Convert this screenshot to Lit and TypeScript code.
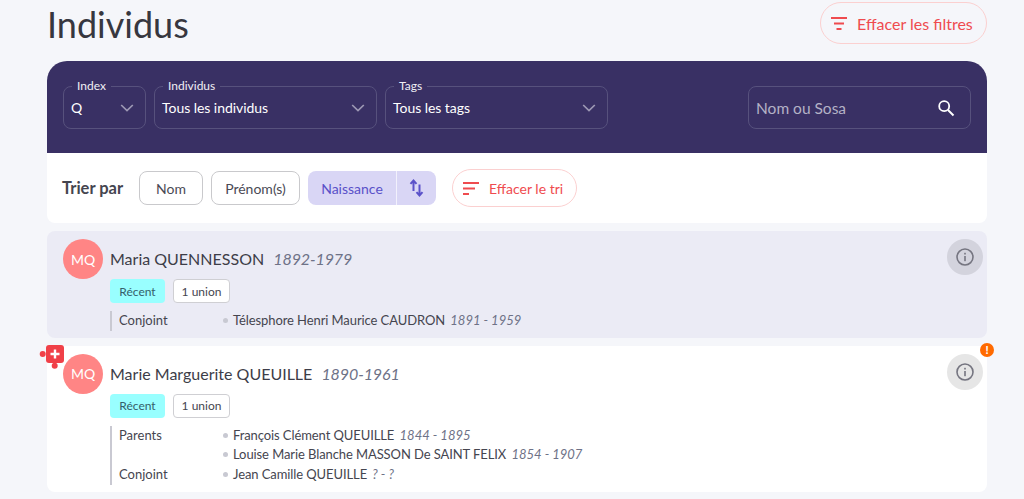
import { LitElement, html, css } from "lit";
import { customElement } from "lit/decorators.js";

const chevron = html`<svg class="chev" width="14" height="8" viewBox="0 0 14 8"><path d="M1.200 1 7 6.600 12.800 1" fill="none" stroke="#9c97b3" stroke-width="1.700"/></svg>`;
const infoIcon = html`<svg width="20" height="20" viewBox="0 0 20 20"><circle cx="10" cy="10" r="8" fill="none" stroke="#757580" stroke-width="1.600"/><rect x="9.200" y="9" width="1.600" height="5.200" fill="#757580"/><rect x="9.200" y="5.800" width="1.600" height="1.700" fill="#757580"/></svg>`;

type Rel = { label: string; name: string; dates: string };
type Person = { name: string; dates: string; rels: Rel[]; active?: boolean; flagged?: boolean };

const people: Person[] = [
  {
    name: "Maria QUENNESSON", dates: "1892-1979", active: true,
    rels: [{ label: "Conjoint", name: "Télesphore Henri Maurice CAUDRON", dates: "1891 - 1959" }],
  },
  {
    name: "Marie Marguerite QUEUILLE", dates: "1890-1961", flagged: true,
    rels: [
      { label: "Parents", name: "François Clément QUEUILLE", dates: "1844 - 1895" },
      { label: "", name: "Louise Marie Blanche MASSON De SAINT FELIX", dates: "1854 - 1907" },
      { label: "Conjoint", name: "Jean Camille QUEUILLE", dates: "? - ?" },
    ],
  },
];

@customElement("app-root")
export class AppRoot extends LitElement {
  static styles = css`
    :host { display: block; height: 499px; overflow: hidden; background: #f5f6fa; font-family: Lato, sans-serif; color: #3d3d48; }
    .page { padding: 2px 37px 0 47px; display: flex; flex-direction: column; }
    .head { display: flex; justify-content: space-between; align-items: flex-start; height: 59px; }
    h1 { margin: 0; font-size: 36px; font-weight: 400; line-height: 44px; color: #37373f; }
    .clear { display: inline-flex; align-items: center; border: 1px solid #fbd0d0; border-radius: 21px; color: #ef4b4f; box-sizing: border-box; }
    .clear-f { width: 167px; height: 42px; padding-left: 10px; gap: 10px; font-size: 16px; }
    .clear-s { width: 125px; height: 38px; padding-left: 10px; gap: 10px; font-size: 14px; background: #fff; }
    .panel { border-radius: 20px 20px 8px 8px; overflow: hidden; background: #fff; }
    .filters { background: #393064; height: 92px; padding: 25px 16px 0; box-sizing: border-box; display: flex; gap: 8px; }
    .field { position: relative; height: 43px; box-sizing: border-box; border: 1px solid #57517d; border-radius: 8px; color: #fff; font-size: 14px; letter-spacing: -0.05px; display: flex; align-items: center; justify-content: space-between; padding: 0 11px 0 7px; }
    .field label { position: absolute; top: -8px; left: 8px; padding: 0 5px; background: #393064; font-size: 12px; line-height: 14px; color: #f0eff5; letter-spacing: 0; }
    .f-index { width: 83px; }
    .f-ind { width: 223px; }
    .f-tag { width: 223px; }
    .f-search { width: 223px; margin-left: auto; color: #b4b2c6; padding-right: 15px; font-size: 15.500px; letter-spacing: 0; }
    .sort { height: 70px; box-sizing: border-box; padding: 16px 15px; display: flex; align-items: center; }
    .sort b { font-size: 16.500px; color: #45454f; width: 77px; font-weight: 700; flex: none; white-space: nowrap; }
    .chip { height: 34px; box-sizing: border-box; border: 1px solid #c9c9cc; border-radius: 8px; background: #fff; display: flex; align-items: center; justify-content: center; font-size: 14px; color: #4a4a55; margin-right: 8px; }
    .c-nom { width: 64px; }
    .c-pre { width: 89px; }
    .split { display: flex; height: 34px; border-radius: 8px; overflow: hidden; background: #d9d6f5; color: #5a51c9; font-size: 14px; margin-right: 16px; }
    .split span { width: 88px; display: flex; align-items: center; justify-content: center; border-right: 1px solid #f2f1fc; }
    .split i { width: 39px; display: flex; align-items: center; justify-content: center; }
    .card { position: relative; margin-top: 8px; border-radius: 8px; background: #fff; padding: 8px 16px 7px; box-sizing: border-box; display: flex; gap: 7px; }
    .card.active { background: #ebebf5; }
    .avatar { width: 40px; height: 40px; flex: none; border-radius: 50%; background: #ff8585; color: #fff; display: flex; align-items: center; justify-content: center; font-size: 14px; }
    .body { flex: 1; }
    .title { font-size: 16px; line-height: 20px; margin-top: 10px; color: #3d3d48; }
    .title em { margin-left: 5px; color: #6e7287; letter-spacing: -0.1px; }
    .badges { display: flex; gap: 8px; margin-top: 10px; }
    .badge { height: 24px; box-sizing: border-box; border-radius: 4px; display: flex; align-items: center; justify-content: center; font-size: 12px; }
    .recent { width: 55px; background: #99ffff; color: #35606a; }
    .union { width: 57px; background: #fff; border: 1px solid #cfcfd3; color: #45454f; }
    .rels { margin-top: 8px; border-left: 2px solid #c9c9d2; padding-left: 7px; display: grid; grid-template-columns: 107px auto; justify-content: start; font-size: 13px; line-height: 19.670px; color: #45454f; }
    .rel-name { position: relative; padding-left: 7px; white-space: nowrap; letter-spacing: -0.09px; }
    .rel-name::before { content: ""; position: absolute; left: -3px; top: 7px; width: 5px; height: 5px; border-radius: 50%; background: #c8c9d2; }
    .rel-name em { margin-left: 2px; color: #6e7287; letter-spacing: 0; }
    .info { position: absolute; right: 4px; top: 8px; width: 36px; height: 36px; border-radius: 50%; background: #e6e6e6; display: flex; align-items: center; justify-content: center; }
    .active .info { background: #d3d3dd; }
    .alert { position: absolute; right: -7px; top: -3px; width: 14px; height: 14px; border-radius: 50%; background: #ff6a00; color: #fff; font-size: 11px; font-weight: 900; line-height: 14px; text-align: center; }
    .plus { position: absolute; left: -9px; top: -2px; }
  `;

  private card(p: Person) {
    return html`
      <div class="card ${p.active ? "active" : ""}">
        <div class="avatar">MQ</div>
        <div class="body">
          <div class="title">${p.name} <em>${p.dates}</em></div>
          <div class="badges"><div class="badge recent">Récent</div><div class="badge union">1 union</div></div>
          <div class="rels">
            ${p.rels.map((r) => html`<div>${r.label}</div><div class="rel-name">${r.name} <em>${r.dates}</em></div>`)}
          </div>
        </div>
        <div class="info">${infoIcon}</div>
        ${p.flagged ? html`<svg class="plus" width="26" height="26" viewBox="0 0 26 26">
          <rect x="8" y="1" width="18" height="18" rx="3" fill="#f04048"/>
          <circle cx="4.700" cy="10" r="3" fill="#f04048"/><circle cx="16.700" cy="21.700" r="3" fill="#f04048"/>
          <path d="M17 5.500v9M12.500 10h9" stroke="#fff" stroke-width="2.400"/></svg>` : ""}
        ${p.flagged ? html`<div class="alert">!</div>` : ""}
      </div>`;
  }

  render() {
    return html`
      <div class="page">
        <div class="head">
          <h1>Individus</h1>
          <div class="clear clear-f">
            <svg width="16" height="13" viewBox="0 0 16 13"><path d="M0 1h16M3 6.500h10M5.500 12h5" stroke="#ef4b4f" stroke-width="2"/></svg>
            Effacer les filtres
          </div>
        </div>
        <div class="panel">
          <div class="filters">
            <div class="field f-index"><label>Index</label>Q ${chevron}</div>
            <div class="field f-ind"><label>Individus</label>Tous les individus ${chevron}</div>
            <div class="field f-tag"><label>Tags</label>Tous les tags ${chevron}</div>
            <div class="field f-search">Nom ou Sosa
              <svg width="18" height="18" viewBox="0 0 18 18"><circle cx="7.200" cy="7.200" r="5" fill="none" stroke="#fff" stroke-width="1.800"/><path d="m11 11 5.500 5.500" stroke="#fff" stroke-width="2"/></svg>
            </div>
          </div>
          <div class="sort">
            <b>Trier par</b>
            <div class="chip c-nom">Nom</div>
            <div class="chip c-pre">Prénom(s)</div>
            <div class="split"><span>Naissance</span><i>
              <svg width="16" height="18" viewBox="0 0 16 18"><path d="M4.500 12V1.500M1.500 4.800 4.500 1.500l3 3.300M10.500 5.500V16.500M7.500 13.200l3 3.300 3-3.300" fill="none" stroke="#5a51c9" stroke-width="2"/></svg>
            </i></div>
            <div class="clear clear-s">
              <svg width="16" height="13" viewBox="0 0 16 13"><path d="M0 1h16M0 6.500h12M0 12h6" stroke="#ef4b4f" stroke-width="2"/></svg>
              Effacer le tri
            </div>
          </div>
        </div>
        ${people.map((p) => this.card(p))}
      </div>`;
  }
}
